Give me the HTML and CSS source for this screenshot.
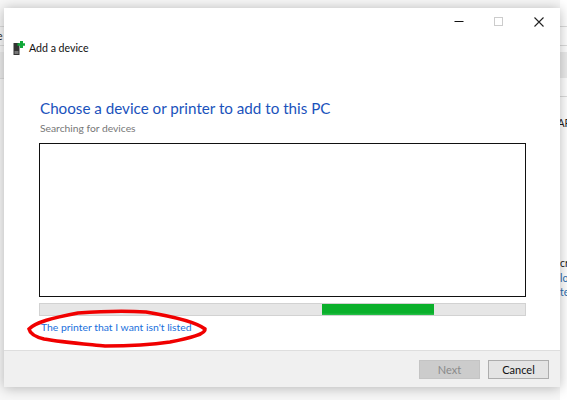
FILE: index.html
```html
<!DOCTYPE html>
<html lang="en">
<head>
<meta charset="utf-8">
<title>Add a device</title>
<link rel="stylesheet" href="styles.css">
</head>
<body>
<div class="desktop">
  <div class="bg-left">
    <span class="bg-line l1"></span><span class="bg-text e">e</span><span class="bg-line l2"></span><span class="bg-band b1"></span><span class="bg-line l3"></span>
  </div>
  <div class="bg-right">
    <span class="bg-line l1"></span><span class="bg-line l2"></span><span class="bg-band b1"></span><span class="bg-line l3"></span>
    <span class="bg-text ap">AP</span>
    <span class="bg-text cr">cr</span>
    <span class="bg-text lo">lo</span>
    <span class="bg-text te">te</span>
  </div>
  <main class="window">
    <div class="controls">
      <svg class="ctl" width="10" height="10" viewBox="0 0 10 10"><path d="M.5 4.500h9" stroke="#111" stroke-width="1" fill="none"/></svg>
      <svg class="ctl" width="10" height="10" viewBox="0 0 10 10"><rect x=".5" y=".5" width="8" height="8" fill="none" stroke="#ccc"/></svg>
      <svg class="ctl" width="10" height="10" viewBox="0 0 10 10"><path d="M.5.5l9 9M9.5.5l-9 9" stroke="#222" stroke-width="1.100" fill="none"/></svg>
    </div>
    <div class="titlebar">
      <svg class="appicon" width="12" height="14" viewBox="0 0 12 14">
        <rect x=".5" y="2" width="6" height="12" fill="#333"/>
        <rect x="1.500" y="10" width="4" height="3" fill="#777"/>
        <path d="M7 0h3v2.200h2v2.600h-2v2.200h-3v-2.200h-2.500v-2.600h2.500z" fill="#11a83a"/>
      </svg>
      <span class="apptitle">Add a device</span>
    </div>
    <div class="content">
      <h1 class="heading">Choose a device or printer to add to this PC</h1>
      <p class="status">Searching for devices</p>
      <div class="listbox"></div>
      <div class="progress"><div class="progress-fill"></div></div>
      <a class="link" href="#">The printer that I want isn't listed</a>
    </div>
    <footer class="footer">
      <button class="btn disabled" type="button">Next</button>
      <button class="btn" type="button">Cancel</button>
    </footer>
  </main>
  <svg class="scribble" width="567" height="400" viewBox="0 0 567 400">
    <path d="M29 329C36 322 52 318 78 313C105 311 130 311 146 312C170 316 196 322 205 329C206 334 190 338 170 342C150 345 125 346 105 346C85 344 60 342 44 339C36 337 30 334 29 329Z" fill="none" stroke="#f00000" stroke-width="3.600"/>
  </svg>
</div>
</body>
</html>
```
FILE: styles.css
```css
* { box-sizing: border-box; }
html, body { margin: 0; padding: 0; }
body { width: 567px; height: 400px; overflow: hidden; font-family: Lato, "Noto Sans", sans-serif; }
.desktop { position: relative; width: 567px; height: 400px; background: #f7f7f7; padding: 8px 7px 13px 4px; overflow: hidden; }
.bg-left, .bg-right { position: absolute; top: 0; bottom: 0; }
.bg-left { left: 0; width: 4px; }
.bg-right { right: 0; width: 7px; background: #fff; }
.bg-line { position: absolute; left: 0; right: 0; height: 1px; background: #dcdcdc; }
.bg-line.l1 { top: 26px; }
.bg-line.l2 { top: 45px; }
.bg-line.l3 { top: 78px; }
.bg-band { position: absolute; left: 0; right: 0; top: 52px; height: 26px; background: #ececec; }
.bg-right .bg-line.l3 { top: 96px; }
.bg-text { position: absolute; font-size: 10.500px; line-height: 12px; color: #222; }
.e { left: -3px; top: 30px; }
.ap { left: -2.500px; top: 117px; }
.cr { left: 0; top: 257px; }
.lo { left: 0; top: 272px; color: #2a6fb0; }
.te { left: 0; top: 286px; color: #2a6fb0; }
.window { position: relative; z-index: 1; width: 556px; height: 379px; background: #fff; display: flex; flex-direction: column; box-shadow: 0 1px 12px rgba(0,0,0,.28); }
.controls { display: flex; justify-content: flex-end; align-items: flex-start; height: 26px; padding: 9px 16px 0 0; gap: 30px; }
.ctl { display: block; }
.titlebar { display: flex; align-items: center; gap: 4px; height: 28px; padding-left: 9px; }
.appicon { display: block; }
.apptitle { font-size: 10.600px; color: #111; }
.content { flex: 1; padding: 0 34px 0 35px; display: flex; flex-direction: column; }
.heading { margin: 36px 0 0 1px; font-size: 15.200px; line-height: 20px; font-weight: 400; color: #1a52bc; white-space: nowrap; }
.status { margin: 4px 0 0 1px; font-size: 10.300px; line-height: 13px; color: #777; }
.listbox { margin-top: 8px; height: 154px; border: 1px solid #111; background: #fff; }
.progress { position: relative; margin-top: 6px; height: 13px; background: #e6e6e6; border: 1px solid #d2d2d2; }
.progress-fill { position: absolute; top: 0; bottom: 0; left: 282px; width: 112px; background: linear-gradient(#0ab02b 80%, #2cc04d); }
.link { margin: 4px 0 0 2px; font-size: 10.400px; line-height: 14px; color: #1a70dc; text-decoration: none; }
.footer { height: 37px; background: #f0f0f0; border-top: 1px solid #dedede; display: flex; justify-content: flex-end; align-items: flex-start; gap: 8px; padding: 9px 11px 0 0; }
.btn { width: 61px; height: 19px; padding: 0; font: 11px/1 Lato, "Noto Sans", sans-serif; color: #111; background: #e4e4e4; border: 1px solid #adadad; }
.btn.disabled { background: #ccc; border-color: #c4c4c4; color: #8a8a8a; }
.scribble { position: absolute; left: 0; top: 0; z-index: 2; pointer-events: none; }
```
